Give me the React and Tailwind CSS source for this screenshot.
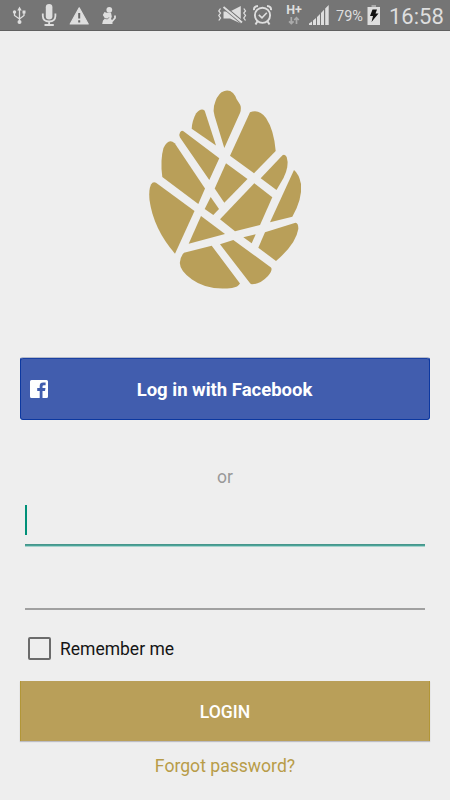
import { useState } from 'react';

const cone = [
    'M224.3 148 L214.6 116 Q213 110 214 106 Q216.5 96 221.5 92.3 Q228 88.5 233 93 Q235 95 236.5 99 L240 104.5 Q241.8 108 240 113 Z',
    'M204.7 110.7 L216 145.5 L191.7 128.7 Q192 121 196 113.5 Q201 107.5 204.7 110.7 Z',
    'M183.5 131.3 L219.3 158.3 L209.3 180 L180 137.5 Q178.4 135.5 180 132.5 Q181.5 129.8 183.5 131.3 Z',
    'M174.7 143.3 L205 188.5 L198.3 204 L162.3 177 Q160 160 163.5 148 Q168.5 137.5 174.7 143.3 Z',
    'M156 182.7 L194.5 211 L175 253.7 Q153.5 229 149.5 200 Q148.5 190 151 184.5 Q153 181 156 182.7 Z',
    'M184 252.7 L211.7 245.7 L240 283.5 Q238 287 232 288 Q208 291 192 279.5 Q180 271 179.8 263 Q180.5 256 184 252.7 Z',
    'M201 216 L225 234 L188.7 243.7 Z',
    'M210.7 197 L219 209 L213.3 215 L204.7 209 Z',
    'M226 163.3 L247.5 179 L224.3 202.7 L214.7 188.5 Z',
    'M250 112.3 Q259 108.5 266 118 Q274 130 275.7 151 L254 173.3 L230 155.7 Z',
    'M260.7 178.3 L282.5 155.2 Q284.5 153.5 286.7 157 Q289.5 166 283.5 178 L276.5 190 Z',
    'M294 170 Q299 174 301 184 Q302.5 199 292.3 216.7 L270 222.3 Z',
    'M254.3 183.3 L272.3 197.3 L260 225 L235 231.2 L220 219.3 Z',
    'M243.3 237.3 L255.7 234.3 L251.7 243.2 Z',
    'M265 232.3 L295.5 222.7 Q298.5 223 298.3 229 Q296 244 276 261 L258.3 247.7 Z',
    'M220 244.3 L233.3 240 L271 267.5 Q273 270 268 276 Q260 284.5 251.7 284.3 Q250.5 284 249.5 282.5 Z',
];

function PineCone() {
    return (
        <svg viewBox="140 80 170 220" width="170" height="220" fill="#b99f59">
            {cone.map((d) => <path key={d} d={d} />)}
        </svg>
    );
}

function StatusBar() {
    return (
        <div className="flex h-[31px] w-full items-start border-b border-[#606060] bg-[#757575] text-[#dedede]">
            {/* Notifications: usb, microphone, warning, assistant */}
            <svg width="125" height="30" viewBox="0 0 125 30" fill="none" stroke="#dedede" className="shrink-0">
                <path d="M19.5 9 V22 M14.5 12 V15.5 L19.5 19 L24 15.5 V12" strokeWidth="1.3" />
                <path d="M17.3 10.5 L19.5 6.5 L21.7 10.5 Z" fill="#dedede" stroke="none" />
                <circle cx="14.5" cy="12" r="1.7" fill="#dedede" stroke="none" />
                <path d="M22.5 10.5 H25.5 V13.5 H22.5 Z" fill="#dedede" stroke="none" />
                <circle cx="19.5" cy="22" r="2" fill="#dedede" stroke="none" />
                <rect x="45.8" y="4" width="6.6" height="15.5" rx="3.3" fill="#dedede" stroke="none" />
                <path d="M42.8 13.5 V16 Q43 21.5 49.1 21.5 Q55.2 21.5 55.4 16 V13.5 M49.1 21.5 V25 M44.5 25 H53.8" strokeWidth="1.8" />
                <path d="M79.2 7.8 L88.2 24 H70.2 Z" fill="#dedede" strokeWidth="1.2" strokeLinejoin="round" />
                <path d="M79.2 13 V18.5 M79.2 20.3 V22.5" stroke="#666666" strokeWidth="2" />
                <circle cx="109.3" cy="9.8" r="2.9" fill="#dedede" stroke="none" />
                <path d="M106.5 12.8 H111 L111.8 16.5 L111 19 L112.5 20.5 V24 H102.2 L103 20.5 L105 18.5 L102.8 15 L104.5 12 Z" fill="#dedede" stroke="none" />
                <path d="M112 21.5 L115 18 V15.5" strokeWidth="1.8" />
                <path d="M105 18.5 L107.5 19 L109 17.3" stroke="#757575" strokeWidth=".8" />
            </svg>
            <div className="flex-1" />
            {/* Muted with vibration, alarm */}
            <svg width="63" height="30" viewBox="215 0 63 30" fill="none" stroke="#dedede" className="shrink-0">
                <path d="M220.5 8.5 L218.8 11 L220.5 13 L218.8 15.5 L220.5 18 L218.8 20.5 M243.8 8.5 L245.5 11 L243.8 13 L245.5 15.5 L243.8 18 L245.5 20.5" strokeWidth="1.3" />
                <path d="M223.5 11.5 H230 L240.8 6 V23.5 L230 18.5 H223.5 Z" fill="#dedede" stroke="none" />
                <path d="M224 8.8 L242 24" stroke="#757575" strokeWidth="1.5" />
                <path d="M224.5 6 L243 21.5" stroke="#757575" strokeWidth="1.2" />
                <path d="M223.5 7 L242 22.5" strokeWidth="1.9" />
                <circle cx="262.5" cy="15.3" r="7.6" strokeWidth="1.9" />
                <path d="M254 10.2 Q253.5 6.5 258 6 M267 6 Q271.5 6.5 271 10.2 M257.5 21.3 L255.5 24.5 M267.5 21.3 L269.5 24.5" strokeWidth="2" />
                <path d="M258.8 14.8 L262 17.8 L266.8 12.8" strokeWidth="1.6" />
            </svg>
            <div className="flex w-[27px] shrink-0 flex-col items-center pl-[5px] pt-[3px] font-['Roboto',sans-serif] text-[12.5px] font-bold leading-[13px]">
                <span>H+</span>
                <svg width="12" height="9" viewBox="0 0 12 9" fill="none" stroke="#aaaaaa" strokeWidth="1.7">
                    <path d="M3.3 1 V7.5 M1 5.3 L3.3 7.6 L5.6 5.3 M8.5 8 V1.8 M6.2 4 L8.5 1.7 L10.8 4" />
                </svg>
            </div>
            <svg width="29" height="30" viewBox="305 0 29 30" fill="#dedede" className="shrink-0">
                <path d="M309 25 V23.5 L312 21.5 V25 Z M313 25 V20.5 L316 18 V25 Z M317 25 V17 L320 14 V25 Z M321 25 V13 L324 9.8 V25 Z M325.2 25 V8.5 L328.7 5 V25 Z" />
            </svg>
            <span className="mt-[9px] w-[32px] shrink-0 pl-[2px] font-['Roboto',sans-serif] text-[14.5px] leading-[16px]">79%</span>
            <svg width="23" height="30" viewBox="366 0 23 30" className="shrink-0">
                <path d="M371.5 5 H376 V7 H371.5 Z" fill="#aaaaaa" />
                <path d="M367.5 7 H380 V25 H367.5 Z" fill="#dedede" />
                <path d="M372.5 9.5 H377 L375.5 13.5 H378.5 L371.5 22 L373 16 H370 Z" fill="#111111" />
            </svg>
            <span className="mr-[7px] mt-[4px] w-[54px] shrink-0 whitespace-nowrap font-['Roboto',sans-serif] text-[22px] leading-[26px]">16:58</span>
        </div>
    );
}

export default function App() {
    const [remember, setRemember] = useState(false);

    return (
        <div className="flex h-[800px] w-[450px] flex-col overflow-hidden bg-[#eeeeee] font-['Roboto',sans-serif]">
            <StatusBar />

            {/* Logo */}
            <div className="mt-[49px] flex justify-center">
                <PineCone />
            </div>

            <button className="mx-5 mt-[57px] flex h-[63px] items-center rounded-[3px] border border-[#0c38a0] border-t-[#b5bac9] bg-[#415dae] text-white shadow-[inset_0_1px_0_#1a40a2]">
                <svg width="18" height="18" viewBox="0 0 18 18" className="ml-[9px]">
                    <path fill="#ffffff" d="M1.5 0 H16.5 Q18 0 18 1.5 V16.5 Q18 18 16.5 18 H12.5 V11 H15 L15.5 8 H12.5 V6.5 Q12.5 5.2 14 5.2 H15.6 V2.6 H13.2 Q9.7 2.6 9.7 6 V8 H7.2 V11 H9.7 V18 H1.5 Q0 18 0 16.5 V1.5 Q0 0 1.5 0 Z" />
                </svg>
                <span className="flex-1 pr-[28px] pt-[3px] text-center text-[18.5px] font-bold leading-6">Log in with Facebook</span>
            </button>

            <p className="mt-[45px] text-center text-[17.5px] leading-6 text-[#999999]">or</p>

            {/* Credentials */}
            <div className="mx-[25px] mt-4 flex h-[42px] items-start border-b border-b-[#a5d3cd] shadow-[inset_0_-1px_0_#4ba398,inset_0_-2px_0_#46968b]">
                <span className="h-[30px] w-[2px] bg-[#009078]" />
            </div>
            <div className="mx-[25px] h-[63px] border-b-2 border-[#a0a0a0]" />

            <div
                role="checkbox"
                aria-checked={remember}
                onClick={() => setRemember(!remember)}
                className="ml-[28px] mt-[26px] flex h-[24px] items-center gap-[9px]"
            >
                <span className={`h-[23px] w-[23px] rounded-[2px] border-2 border-[#6b6b6b] ${remember ? 'bg-[#009078]' : ''}`} />
                <span className="pt-px text-[17.5px] leading-[22px] text-[#151515]">Remember me</span>
            </div>

            <button className="mx-5 mt-[21px] flex h-[60px] items-center justify-center border-x border-[#b29637] bg-[#b99f59] pt-[2px] text-[17.6px] font-medium text-white shadow-[0_1px_1px_#bdbdc3]">
                LOGIN
            </button>
            <p className="mt-[13px] text-center text-[17.6px] leading-6 text-[#b89c48]">Forgot password?</p>
        </div>
    );
}
